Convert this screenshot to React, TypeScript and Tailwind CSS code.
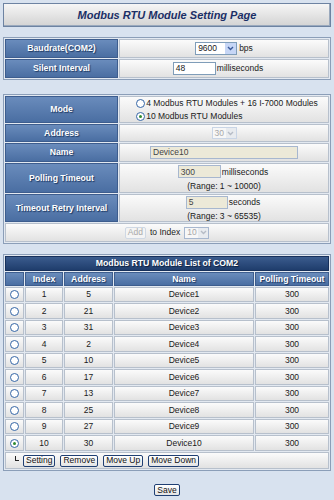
import React from "react";

const rows: [number, number, string][] = [
  [1, 5, "Device1"],
  [2, 21, "Device2"],
  [3, 31, "Device3"],
  [4, 2, "Device4"],
  [5, 10, "Device5"],
  [6, 17, "Device6"],
  [7, 13, "Device7"],
  [8, 25, "Device8"],
  [9, 27, "Device9"],
  [10, 30, "Device10"],
];

function Label({ children, className = "" }: { children: React.ReactNode; className?: string }) {
  return (
    <div
      className={`flex items-center justify-center border border-[#3d5d8e] bg-linear-to-b from-[#6a8cbc] to-[#4a6ea2] text-white font-bold text-[8.7px] leading-none [text-shadow:1px_1px_1px_#1c365f] ${className}`}
    >
      {children}
    </div>
  );
}

function Value({ children, className = "" }: { children: React.ReactNode; className?: string }) {
  return (
    <div
      className={`flex items-center justify-center border border-[#b7c0cc] bg-linear-to-b from-[#fbfbfb] to-[#e2e2e2] text-[8.5px] leading-none text-[#1a1a1a] ${className}`}
    >
      {children}
    </div>
  );
}

function Chevron({ color }: { color: string }) {
  return (
    <svg width="7" height="5" viewBox="0 0 7 5">
      <path d="M1 1 L3.5 3.5 L6 1" fill="none" stroke={color} strokeWidth="1.4" />
    </svg>
  );
}

function Radio({ checked }: { checked?: boolean }) {
  return (
    <span className="flex h-[9px] w-[9px] items-center justify-center rounded-full border border-[#3566a6] bg-white">
      {checked && <span className="h-[3px] w-[3px] rounded-full bg-[#2f8a2f]" />}
    </span>
  );
}

function Btn({ children, disabled }: { children: React.ReactNode; disabled?: boolean }) {
  return (
    <span
      className={
        disabled
          ? "flex h-[12px] items-center rounded-[2px] border border-[#cfd8e4] bg-[#f4f4f4] px-[2px] text-[8.5px] leading-none text-[#a9a9a9]"
          : "flex h-[12px] items-center rounded-[2px] border border-[#1f3f73] bg-linear-to-b from-white to-[#e4e4e4] px-[2px] text-[8.5px] leading-none text-[#111]"
      }
    >
      {children}
    </span>
  );
}

export default function App() {
  return (
    <div className="h-[500px] w-[334px] overflow-hidden bg-[#d8e2ef] pt-[3px] font-['Liberation_Sans',Arial,sans-serif]">
      {/* Title */}
      <div className="mx-[3px] flex h-[24px] items-center justify-center border border-[#6d83a2] bg-linear-to-b from-[#f6f6f6] to-[#d3d3d3] shadow-[inset_-1px_-1px_0_#9aa9bd]">
        <span className="text-[11px] font-bold italic text-[#1b2f66]">Modbus RTU Module Setting Page</span>
      </div>

      {/* Table 1 */}
      <div className="mx-[3px] mt-[10px] grid grid-cols-[113px_1fr] gap-[1px] border border-[#8b9eb8] bg-[#e3e9f1] p-[1px]">
        <Label className="h-[19px]">Baudrate(COM2)</Label>
        <Value className="h-[19px]">
          <span className="flex h-[13px] w-[42px] items-center border border-[#7f9db9] bg-white">
            <span className="flex-1 pl-[2px]">9600</span>
            <span className="flex h-full w-[11px] items-center justify-center bg-[#c6d6f6]">
              <Chevron color="#3a5a9a" />
            </span>
          </span>
          <span className="ml-[2px]">bps</span>
        </Value>
        <Label className="h-[19px]">Silent Interval</Label>
        <Value className="h-[19px]">
          <span className="ml-[-12px] flex h-[13px] w-[43px] items-center border border-[#7f9db9] bg-white pl-[2px]">48</span>
          <span className="ml-[1px]">milliseconds</span>
        </Value>
      </div>

      {/* Table 2 */}
      <div className="mx-[3px] mt-[14px] grid grid-cols-[113px_1fr] gap-[1px] border border-[#8b9eb8] bg-[#e3e9f1] p-[1px]">
        <Label className="h-[27px]">Mode</Label>
        <Value className="h-[27px]">
          <div className="ml-[6px] flex flex-col items-start gap-[4px]">
            <div className="flex items-center gap-[1px]">
              <Radio />
              <span>4 Modbus RTU Modules + 16 I-7000 Modules</span>
            </div>
            <div className="flex items-center gap-[1px]">
              <Radio checked />
              <span>10 Modbus RTU Modules</span>
            </div>
          </div>
        </Value>
        <Label className="h-[18px]">Address</Label>
        <Value className="h-[18px]">
          <span className="flex h-[12px] w-[25px] items-center border border-[#c9d5e6] bg-[#f7f7f7] text-[#a8a8a8]">
            <span className="flex-1 pl-[2px]">30</span>
            <span className="flex h-full w-[10px] items-center justify-center bg-[#e8ebef]">
              <Chevron color="#b6bcc6" />
            </span>
          </span>
        </Value>
        <Label className="h-[19px]">Name</Label>
        <Value className="h-[19px]">
          <span className="flex h-[13px] w-[148px] items-center border border-[#a7b7cf] bg-[#ece9d8] pl-[2px] text-[#444]">Device10</span>
        </Value>
        <Label className="h-[30px]">Polling Timeout</Label>
        <Value className="h-[30px] flex-col gap-[4px]">
          <div className="flex items-center">
            <span className="ml-[-2px] flex h-[13px] w-[43px] items-center border border-[#a7b7cf] bg-[#ece9d8] pl-[2px] text-[#444]">300</span>
            <span className="ml-[1px]">milliseconds</span>
          </div>
          <span>(Range: 1 ~ 10000)</span>
        </Value>
        <Label className="h-[28px]">Timeout Retry Interval</Label>
        <Value className="h-[28px] flex-col gap-[3px]">
          <div className="flex items-center">
            <span className="ml-[-2px] flex h-[13px] w-[42px] items-center border border-[#a7b7cf] bg-[#ece9d8] pl-[2px] text-[#444]">5</span>
            <span className="ml-[1px]">seconds</span>
          </div>
          <span>(Range: 3 ~ 65535)</span>
        </Value>
        <Value className="col-span-2 h-[19px] gap-[4px]">
          <Btn disabled>Add</Btn>
          <span>to Index</span>
          <span className="flex h-[12px] w-[25px] items-center border border-[#a7b7cf] bg-[#f7f7f7] text-[#a8a8a8]">
            <span className="flex-1 pl-[2px]">10</span>
            <span className="flex h-full w-[10px] items-center justify-center bg-[#e8ebef]">
              <Chevron color="#b6bcc6" />
            </span>
          </span>
        </Value>
      </div>

      {/* Table 3 */}
      <div className="mx-[3px] mt-[10px] grid grid-cols-[19px_38px_49px_140px_1fr] gap-[1px] border border-[#8b9eb8] bg-[#e3e9f1] p-[1px]">
        <div className="col-span-5 flex h-[15px] items-center justify-center border border-[#17305a] bg-linear-to-b from-[#3b5c8e] to-[#1f3d6c] text-[8.7px] font-bold leading-none text-white [text-shadow:1px_1px_1px_#0d1d3a]">
          Modbus RTU Module List of COM2
        </div>
        <Label className="h-[14px]">{""}</Label>
        <Label className="h-[14px]">Index</Label>
        <Label className="h-[14px]">Address</Label>
        <Label className="h-[14px]">Name</Label>
        <Label className="h-[14px]">Polling Timeout</Label>
        {rows.map(([i, a, n]) => {
          const h = i % 2 === 0 ? "h-[16px]" : "h-[15px]";
          return (
            <React.Fragment key={i}>
              <Value className={h}>
                <Radio checked={i === 10} />
              </Value>
              <Value className={h}>{i}</Value>
              <Value className={h}>{a}</Value>
              <Value className={h}>{n}</Value>
              <Value className={h}>300</Value>
            </React.Fragment>
          );
        })}
        <Value className="col-span-5 h-[17px] justify-start gap-[5px] pl-[9px]">
          <span className="mb-[4px] mr-[-1px] h-[5px] w-[4px] border-b border-l border-[#222]" />
          <Btn>Setting</Btn>
          <Btn>Remove</Btn>
          <Btn>Move Up</Btn>
          <Btn>Move Down</Btn>
        </Value>
      </div>

      <div className="mt-[13px] flex justify-center">
        <Btn>Save</Btn>
      </div>
    </div>
  );
}
